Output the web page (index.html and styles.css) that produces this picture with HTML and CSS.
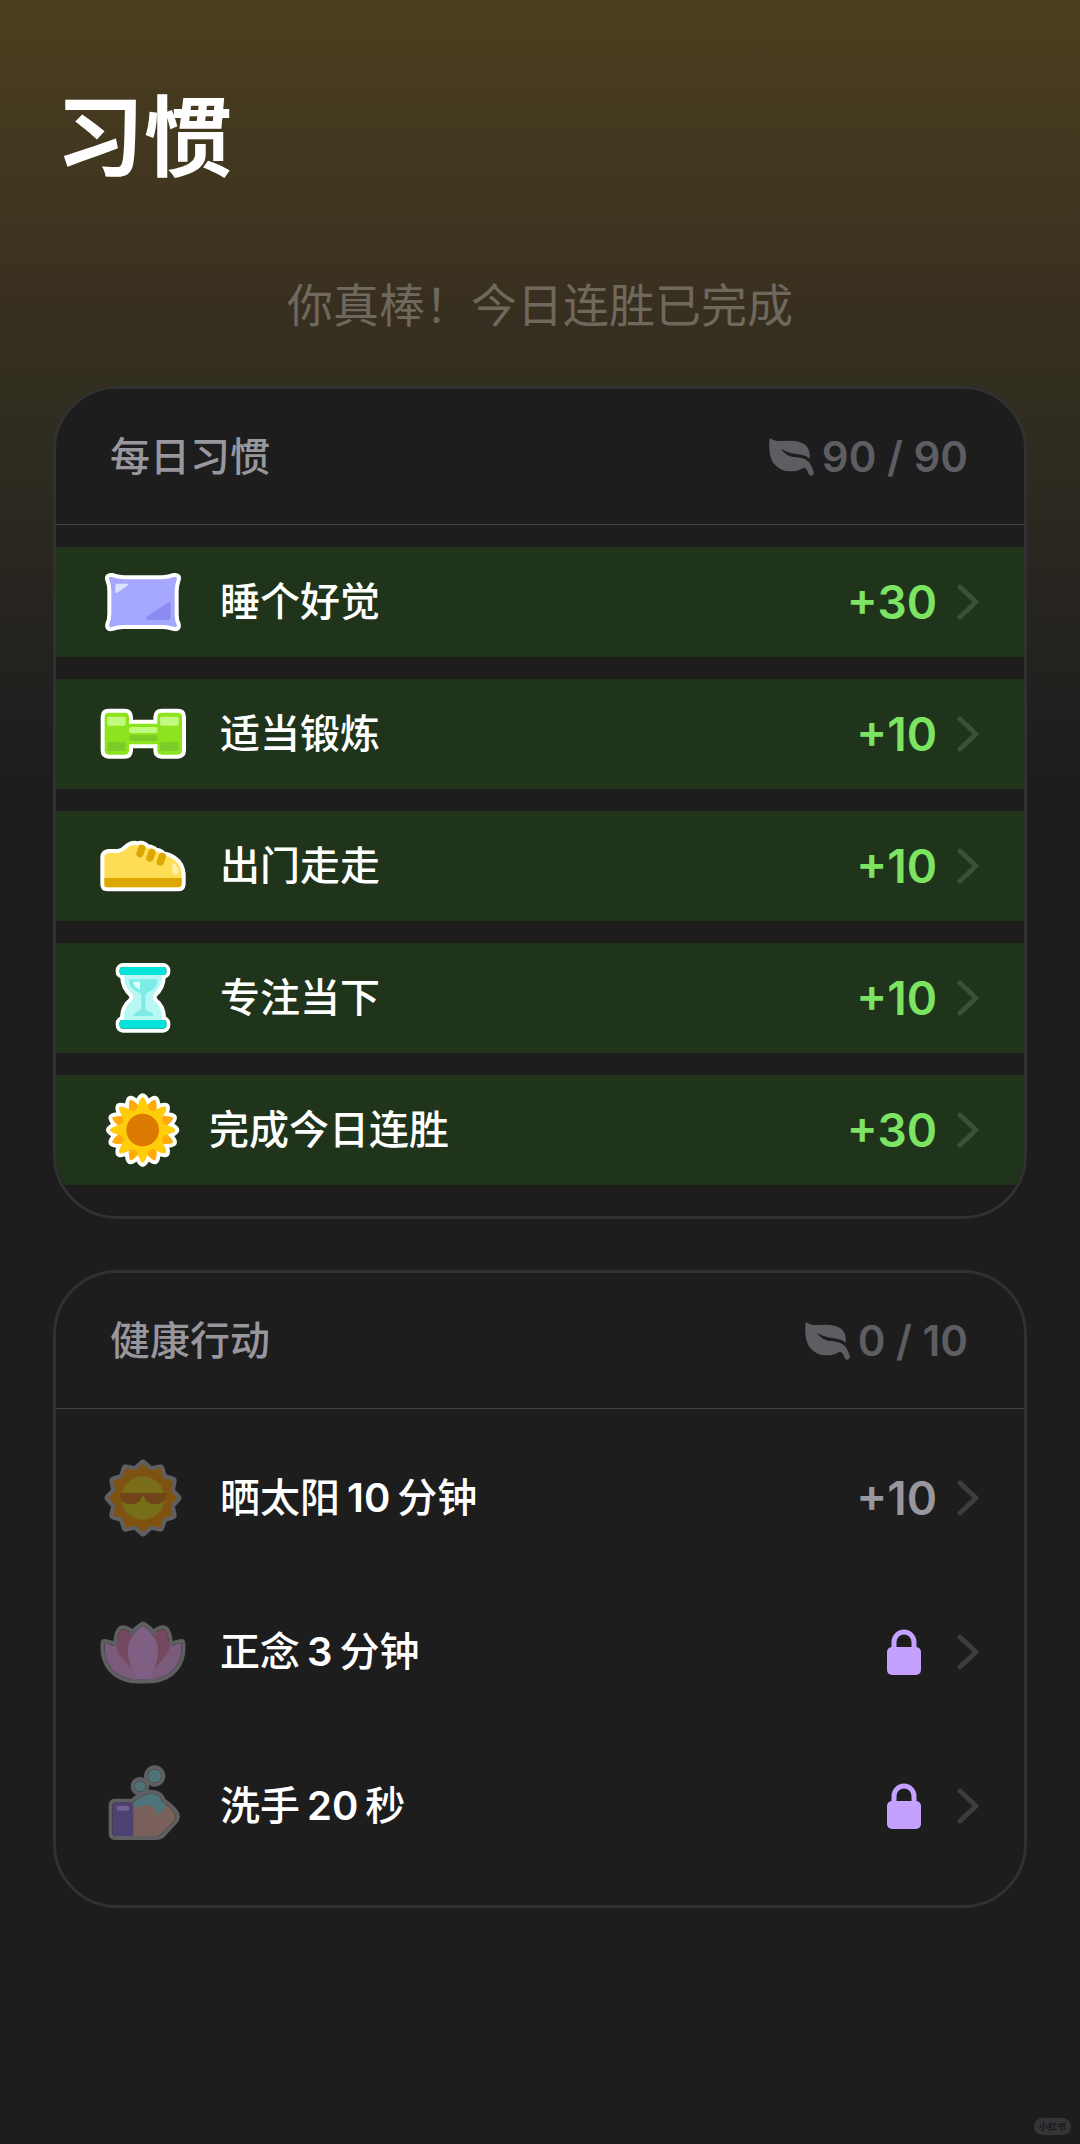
FILE: index.html
```html
<!DOCTYPE html>
<html lang="zh-CN">
<head>
  <meta charset="UTF-8">
  <meta name="viewport" content="width=device-width, initial-scale=1.0">
  <title>习惯</title>
  <link rel="stylesheet" href="styles.css">
</head>
<body>
  <!-- Shared icon shapes -->
  <svg class="sprite" aria-hidden="true">
    <symbol id="leaf" viewBox="0 0 134 114">
      <path d="M1 3Q2-1 6 2Q16 10 40 9Q96 4 113 25Q125 40 121 62Q112 52 82 48Q52 44 36 32Q48 56 84 58Q110 60 122 76Q130 88 134 102Q134 113 126 113Q120 113 118 107Q112 88 103 89Q88 101 60 100Q30 98 12 74Q-3 52 1 3Z"/>
    </symbol>
    <symbol id="chevron" viewBox="0 0 22 36">
      <path d="M3 3L19 18L3 33" fill="none" stroke="currentColor" stroke-width="5" stroke-linecap="round" stroke-linejoin="round"/>
    </symbol>
    <symbol id="lock" viewBox="0 0 34 46">
      <path d="M7 20V13a10 10 0 0 1 20 0V20" fill="none" stroke="currentColor" stroke-width="5"/>
      <rect y="18" width="34" height="28" rx="5" fill="currentColor"/>
    </symbol>
    <path id="petal" d="M0-98Q7-94 13-78Q21-62 22-40H-22Q-21-62-13-78Q-7-94 0-98Z"/>
  </svg>

  <header class="page-header">
    <h1>习惯</h1>
    <p>你真棒！今日连胜已完成</p>
  </header>

  <main>
    <section class="card" aria-labelledby="dailyTitle">
      <div class="card-header">
        <h2 id="dailyTitle">每日习惯</h2>
        <div class="score"><svg class="leaf"><use href="#leaf"/></svg><span>90 / 90</span></div>
      </div>
      <ul class="habit-list">
        <li>
          <button class="habit done">
            <svg class="habit-icon" viewBox="0 0 258 258">
              <path class="outline" fill="#a6a8ff" d="M28 62Q24 52 36 54Q50 60 70 61H188Q208 60 222 54Q234 52 230 62Q224 80 224 95V165Q224 185 230 196Q233 207 222 204Q206 198 188 198H70Q52 198 36 204Q25 207 28 196Q34 182 34 165V95Q34 78 28 62Z"/>
              <path fill="#dde0ff" d="M50 74H80Q87 75 82 80L52 101Q46 104 46 97V79Q46 74 50 74Z"/>
              <path fill="#8c8cf0" d="M205 130Q212 125 212 133V176Q212 183 204 183H143Q133 180 141 172Z"/>
            </svg>
            <span class="habit-name">睡个好觉</span>
            <span class="points">+30</span>
            <svg class="chevron"><use href="#chevron"/></svg>
          </button>
        </li>
        <li>
          <button class="habit done">
            <svg class="habit-icon" viewBox="0 0 258 258">
              <path class="outline" fill="#8ce31e" d="M26 65H74Q86 65 87 78V98H172V78Q173 65 185 65H233Q246 65 246 78V178Q246 191 233 191H185Q172 191 172 178V160H87V178Q86 191 74 191H26Q14 191 14 178V78Q14 65 26 65Z"/>
              <g fill="#c2fa80">
                <rect x="22" y="77" width="55" height="27" rx="6"/>
                <rect x="180" y="77" width="56" height="27" rx="6"/>
                <rect x="87" y="108" width="86" height="18" rx="8"/>
              </g>
              <g fill="#7dcb28">
                <rect x="22" y="153" width="55" height="27" rx="6"/>
                <rect x="180" y="153" width="56" height="27" rx="6"/>
                <rect x="87" y="132" width="86" height="18" rx="8"/>
              </g>
            </svg>
            <span class="habit-name">适当锻炼</span>
            <span class="points">+10</span>
            <svg class="chevron"><use href="#chevron"/></svg>
          </button>
        </li>
        <li>
          <button class="habit done">
            <svg class="habit-icon" viewBox="0 0 258 258">
              <path class="outline" fill="#ffdd55" d="M13 165V102Q14 91 26 90H56Q70 87 84 73Q92 65 104 65Q112 69 120 65Q132 64 142 76Q156 76 166 86Q180 86 190 98Q206 98 222 110Q242 124 245 152V183Q244 193 234 193H22Q13 193 13 184Z"/>
              <path fill="#dca800" d="M13 165H245V183Q244 193 234 193H22Q13 193 13 184Z"/>
              <path fill="none" stroke="#dca800" stroke-width="22" stroke-linecap="round" d="M125 76L120 92M156 88L150 105M187 100L181 117"/>
              <path fill="#fff0a8" d="M217 124Q220 118 226 124Q238 138 236 150Q228 160 217 150Z"/>
            </svg>
            <span class="habit-name">出门走走</span>
            <span class="points">+10</span>
            <svg class="chevron"><use href="#chevron"/></svg>
          </button>
        </li>
        <li>
          <button class="habit done">
            <svg class="habit-icon" viewBox="0 0 258 258">
              <g class="outline">
                <path fill="#b8f8f4" d="M73 58Q70 92 97 117Q104 128 95 139Q70 158 72 196H186Q188 158 163 139Q154 128 161 117Q188 92 185 58Z"/>
                <rect x="59" y="36" width="140" height="24" rx="10"/>
                <rect x="59" y="195" width="140" height="26" rx="10"/>
              </g>
              <path fill="#b8f8f4" d="M73 58Q70 92 97 117Q104 128 95 139Q70 158 72 196H186Q188 158 163 139Q154 128 161 117Q188 92 185 58Z"/>
              <path fill="#7debe5" d="M92 73H167Q174 73 172 80Q167 104 144 112Q136 116 136 124V160Q138 168 152 171Q160 175 160 183H100Q100 175 108 171Q122 168 124 160V124Q124 116 116 112Q92 104 87 80Q86 73 92 73Z"/>
              <path fill="#defffc" d="M103 80H120V104Q104 98 100 85Q99 80 103 80Z"/>
              <g fill="#06e3da">
                <rect x="59" y="36" width="140" height="24" rx="10"/>
                <rect x="59" y="195" width="140" height="26" rx="10"/>
              </g>
            </svg>
            <span class="habit-name">专注当下</span>
            <span class="points">+10</span>
            <svg class="chevron"><use href="#chevron"/></svg>
          </button>
        </li>
        <li>
          <button class="habit done streak">
            <svg class="habit-icon" viewBox="0 0 258 258">
              <g transform="translate(128 129)">
                <g class="outline" fill="#ffab0c">
                  <use href="#petal"/><use href="#petal" transform="rotate(45)"/><use href="#petal" transform="rotate(90)"/><use href="#petal" transform="rotate(135)"/>
                  <use href="#petal" transform="rotate(180)"/><use href="#petal" transform="rotate(225)"/><use href="#petal" transform="rotate(270)"/><use href="#petal" transform="rotate(315)"/>
                  <use href="#petal" transform="rotate(22)"/><use href="#petal" transform="rotate(68)"/><use href="#petal" transform="rotate(112)"/><use href="#petal" transform="rotate(158)"/>
                  <use href="#petal" transform="rotate(202)"/><use href="#petal" transform="rotate(248)"/><use href="#petal" transform="rotate(292)"/><use href="#petal" transform="rotate(338)"/>
                </g>
                <g fill="#ffab0c">
                  <use href="#petal" transform="rotate(22)"/><use href="#petal" transform="rotate(68)"/><use href="#petal" transform="rotate(112)"/><use href="#petal" transform="rotate(158)"/>
                  <use href="#petal" transform="rotate(202)"/><use href="#petal" transform="rotate(248)"/><use href="#petal" transform="rotate(292)"/><use href="#petal" transform="rotate(338)"/>
                </g>
                <g fill="#ffcd0a">
                  <circle r="64"/>
                  <use href="#petal"/><use href="#petal" transform="rotate(45)"/><use href="#petal" transform="rotate(90)"/><use href="#petal" transform="rotate(135)"/>
                  <use href="#petal" transform="rotate(180)"/><use href="#petal" transform="rotate(225)"/><use href="#petal" transform="rotate(270)"/><use href="#petal" transform="rotate(315)"/>
                </g>
                <circle r="49" fill="#db7900"/>
              </g>
            </svg>
            <span class="habit-name">完成今日连胜</span>
            <span class="points">+30</span>
            <svg class="chevron"><use href="#chevron"/></svg>
          </button>
        </li>
      </ul>
    </section>

    <section class="card" aria-labelledby="healthTitle">
      <div class="card-header">
        <h2 id="healthTitle">健康行动</h2>
        <div class="score"><svg class="leaf"><use href="#leaf"/></svg><span>0 / 10</span></div>
      </div>
      <ul class="habit-list spacious">
        <li>
          <button class="habit">
            <svg class="habit-icon" viewBox="0 0 258 258">
              <g transform="translate(129 129)">
                <path class="outline dim" fill="#7e5312" d="M0-103L22-83L52-89L61-61L89-52L83-22L103 0L83 22L89 52L61 61L52 89L22 83L0 103L-22 83L-52 89L-61 61L-89 52L-83 22L-103 0L-83-22L-89-52L-61-61L-52-89L-22-83Z"/>
                <circle r="65" fill="#786d18"/>
                <path fill="#70451a" d="M-69-15H69Q68 19 36 19Q8 18 3-5Q0-9-3-5Q-8 18-36 19Q-68 19-69-15Z"/>
              </g>
            </svg>
            <span class="habit-name">晒太阳<span class="amount">10</span>分钟</span>
            <span class="points">+10</span>
            <svg class="chevron"><use href="#chevron"/></svg>
          </button>
        </li>
        <li>
          <button class="habit">
            <svg class="habit-icon" viewBox="0 0 258 258">
              <g class="outline dim">
                <path d="M14 102C60 108 110 150 129 211H100C45 205 8 165 14 102Z"/>
                <path d="M244 102C198 108 148 150 129 211H158C213 205 250 165 244 102Z"/>
                <path d="M62 64Q70 56 90 70L129 190Q60 150 53 110Q50 80 62 64Z"/>
                <path d="M196 64Q188 56 168 70L129 190Q198 150 205 110Q208 80 196 64Z"/>
                <path d="M129 50C155 66 174 92 174 125C174 160 160 190 146 211H112C98 190 84 160 84 125C84 92 103 66 129 50Z"/>
              </g>
              <g fill="#7a5b7c">
                <path d="M14 102C45 106 85 132 100 170L158 211H100C45 205 8 165 14 102Z"/>
                <path d="M244 102C213 106 173 132 158 170L100 211H158C213 205 250 165 244 102Z"/>
              </g>
              <g fill="#764860">
                <path d="M62 64Q70 56 90 70L110 190Q60 150 50 118Q50 80 62 64Z"/>
                <path d="M196 64Q188 56 168 70L148 190Q198 150 208 118Q208 80 196 64Z"/>
              </g>
              <path fill="#805f85" d="M129 50C155 66 174 92 174 125C174 160 160 190 146 211H112C98 190 84 160 84 125C84 92 103 66 129 50Z"/>
            </svg>
            <span class="habit-name">正念<span class="amount">3</span>分钟</span>
            <svg class="lock" role="img" aria-label="未解锁"><use href="#lock"/></svg>
            <svg class="chevron"><use href="#chevron"/></svg>
          </button>
        </li>
        <li>
          <button class="habit">
            <svg class="habit-icon" viewBox="0 0 258 258">
              <g class="outline dim">
                <circle cx="164" cy="39" r="20"/>
                <circle cx="120" cy="70" r="16"/>
                <path d="M44 119H100Q112 104 124 105Q140 88 165 94Q182 98 186 116Q210 130 226 153Q230 164 222 173L187 211Q180 219 170 219H44Q38 219 38 212V126Q38 119 44 119Z"/>
              </g>
              <path fill="#7a605a" d="M98 119L186 116Q210 130 226 153Q230 164 222 173L187 211Q180 219 170 219H98Z"/>
              <path fill="#4e4272" d="M44 119H100V219H44Q38 219 38 212V126Q38 119 44 119Z"/>
              <rect x="50" y="129" width="38" height="14" rx="7" fill="#75628c"/>
              <g fill="#4e7479">
                <circle cx="164" cy="39" r="20"/>
                <circle cx="120" cy="70" r="16"/>
                <path d="M100 119Q112 104 124 105Q140 88 165 94Q182 98 186 116Q200 122 194 134Q186 134 188 146Q180 158 168 148Q170 136 158 132Q140 120 124 130Q110 136 100 124Z"/>
              </g>
            </svg>
            <span class="habit-name">洗手<span class="amount">20</span>秒</span>
            <svg class="lock" role="img" aria-label="未解锁"><use href="#lock"/></svg>
            <svg class="chevron"><use href="#chevron"/></svg>
          </button>
        </li>
      </ul>
    </section>
  </main>

  <span class="watermark">小红书</span>
</body>
</html>
```

FILE: styles.css
```css
* {
  box-sizing: border-box;
}

body {
  font-family: Inter, "Noto Sans CJK SC", sans-serif;
  margin: 0;
  min-height: 100vh;
  position: relative;
  color: white;
  background: #1d1d1e linear-gradient(#4b3f1f 0, #40361f 190px, #382f20 300px, #312e20 400px, #292620 560px, #1d1d1e 780px) no-repeat;
}

h1, h2, p, ul {
  margin: 0;
  padding: 0;
}

.sprite {
  position: absolute;
  width: 0;
  height: 0;
}

.page-header {
  padding: 75px 56px 48px;
}

h1 {
  font-size: 88px;
  line-height: 124px;
  font-weight: 700;
}

.page-header p {
  margin-top: 73px;
  font-size: 46px;
  line-height: 66px;
  text-align: center;
  color: #6e685d;
}

main {
  display: flex;
  flex-direction: column;
  gap: 51px;
  padding: 0 53px;
}

.card {
  border: 3px solid #313132;
  border-radius: 64px;
  background-color: #1d1d1e;
  overflow: hidden;
}

.card-header {
  display: flex;
  justify-content: space-between;
  align-items: center;
  height: 136px;
  padding: 0 56px 0 54px;
  border-bottom: 1px solid #414143;
}

h2 {
  font-size: 40px;
  line-height: 60px;
  font-weight: 500;
  color: #98979d;
}

.score {
  display: flex;
  align-items: center;
  gap: 8px;
  font-size: 42px;
  font-weight: 600;
  color: #5e5d62;
}

.leaf {
  width: 45px;
  height: 38px;
  fill: currentColor;
}

.habit-list {
  list-style: none;
  display: flex;
  flex-direction: column;
  gap: 22px;
  padding: 22px 0 31px;
}

.habit-list.spacious {
  gap: 44px;
  padding: 34px 0 44px;
}

.habit {
  display: flex;
  align-items: center;
  width: 100%;
  height: 110px;
  padding: 0 45px 0 44px;
  border: none;
  background: none;
  font: inherit;
  text-align: left;
  color: #98979d;
  cursor: pointer;
}

.habit.done {
  background-color: #1f341a;
  color: #7ce462;
}

.habit-icon {
  width: 86px;
  height: 86px;
}

.outline {
  stroke: white;
  stroke-width: 24;
  stroke-linejoin: round;
  paint-order: stroke;
}

.outline.dim {
  stroke: #5f5f62;
}

.habit-name {
  flex: 1;
  margin-left: 34px;
  font-size: 40px;
  line-height: 60px;
  font-weight: 500;
  color: white;
}

.streak .habit-name {
  margin-left: 23px;
}

.amount {
  margin: 0 7px;
  font-weight: 600;
}

.points {
  font-size: 46px;
  font-weight: 600;
}

.chevron {
  width: 22px;
  height: 36px;
  margin-left: 20px;
  color: #3d3d3f;
}

.done .chevron {
  color: #3b5137;
}

.lock {
  width: 34px;
  height: 46px;
  margin-right: 16px;
  color: #c4a0ff;
}

.watermark {
  position: absolute;
  right: 9px;
  bottom: 9px;
  padding: 0 5px;
  border-radius: 9px;
  background-color: #353537;
  font-size: 9px;
  line-height: 17px;
  font-weight: 700;
  color: #19191b;
}
```
